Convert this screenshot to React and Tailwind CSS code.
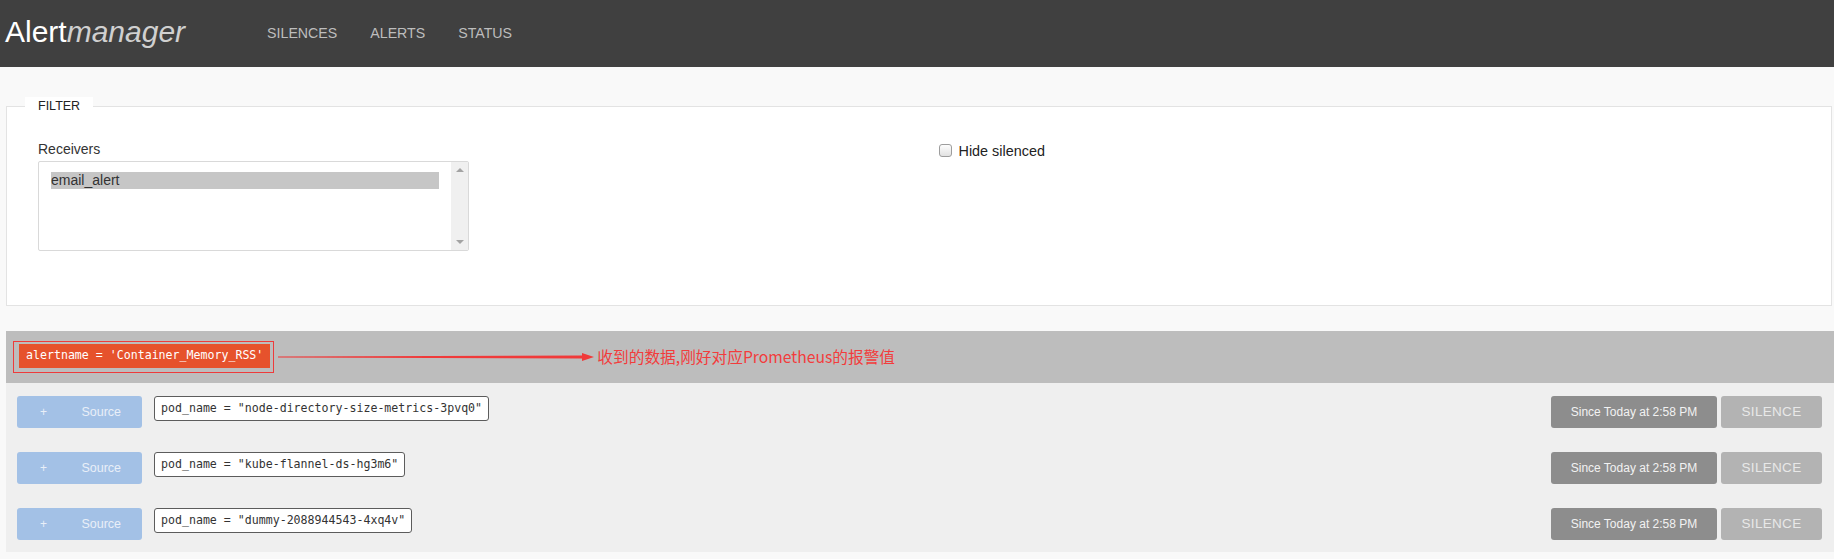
import React from 'react';

const sans = { fontFamily: '"Liberation Sans", Arial, sans-serif' };
const mono = { fontFamily: '"DejaVu Sans Mono", "Liberation Mono", monospace' };

const pods = [
    'pod_name = "node-directory-size-metrics-3pvq0"',
    'pod_name = "kube-flannel-ds-hg3m6"',
    'pod_name = "dummy-2088944543-4xq4v"',
];

const Header = () => (
    <div className="h-[67px] bg-[#404040] flex items-center">
        <div className="pl-[5px] text-[30px] leading-none text-white -mt-[4px]">
            Alert<em className="text-[#d0d0d0]">manager</em>
        </div>
        <nav className="flex ml-[82px] gap-[33px] text-[14.2px] text-[#bdbdbd]">
            <span>SILENCES</span>
            <span>ALERTS</span>
            <span>STATUS</span>
        </nav>
    </div>
);

const Filter = () => (
    <fieldset className="mt-[30px] ml-[6px] mr-[2px] border border-[#e3e3e3] bg-white px-[18px] pb-[54px]">
        <legend className="px-[13px] text-[12.5px] leading-[18px] text-[#222] bg-white">FILTER</legend>
        <div className="grid grid-cols-2 gap-x-[40px] pl-[13px] pr-[14px] pt-[24px]">
            <div>
                <div className="text-[14px] leading-[20px] text-[#333] mb-[2px]">Receivers</div>
                <div className="w-[431px] h-[90px] border border-[#d9d9d9] rounded-[2px] flex bg-white">
                    <div className="flex-1 pl-[12px] pr-[12px] pt-[10px]">
                        <div className="bg-[#c6c6c6] h-[17px] text-[14px] leading-[17px] text-[#333]">email_alert</div>
                    </div>
                    <div className="w-[17px] bg-[#f0f0f0] flex flex-col items-center justify-between py-[6px]">
                        <span className="w-0 h-0 border-x-[4px] border-x-transparent border-b-[4px] border-b-[#a3a3a3]"></span>
                        <span className="w-0 h-0 border-x-[4px] border-x-transparent border-t-[4px] border-t-[#a3a3a3]"></span>
                    </div>
                </div>
            </div>
            <div className="flex items-start pt-[2px]">
                <span className="w-[13px] h-[13px] mt-[3px] border border-[#9d9d9d] rounded-[3px] bg-gradient-to-b from-[#fdfdfd] to-[#e2e2e2]"></span>
                <span className="ml-[7px] text-[14.4px] leading-[20px] text-[#222]">Hide silenced</span>
            </div>
        </div>
    </fieldset>
);

const Arrow = () => (
    <svg width="318" height="12" viewBox="0 0 318 12" className="ml-[4px]">
        <polygon points="0,5.6 306,4.5 306,7.5 0,6.4" fill="#f03a3a" />
        <polygon points="304,2 316,6 304,10" fill="#f03a3a" />
    </svg>
);

const Row = ({ label }) => (
    <div className="flex items-start">
        <div className="w-[125px] h-[32px] bg-[#a3c1e6] rounded-[3px] flex items-center text-[12px] text-[#e9eff8]">
            <span className="pl-[23px]">+</span>
            <span className="ml-auto mr-[21px] text-[12.5px]">Source</span>
        </div>
        <div className="ml-[12px] h-[25px] border border-[#5c5c5c] rounded-[3px] bg-white px-[6px] flex items-center text-[11.6px] text-[#333]" style={mono}>
            {label}
        </div>
        <div className="ml-auto flex gap-[4px]">
            <div className="w-[166px] h-[32px] bg-[#8d8d8d] rounded-[3px] flex items-center justify-center text-[12px] text-[#f2f2f2]">
                Since Today at 2:58 PM
            </div>
            <div className="w-[101px] h-[32px] bg-[#b3b3b3] rounded-[3px] flex items-center justify-center text-[13.5px] tracking-[0.3px] text-[#e8e8e8]">
                SILENCE
            </div>
        </div>
    </div>
);

const AlertGroup = () => (
    <div className="mt-[25px] ml-[6px]">
        <div className="h-[52px] bg-[#bdbdbd] flex items-center pl-[7px]">
            <div className="border border-[#ee3b3b] pt-[2px] pr-[3px] pb-[4px] pl-[5px]">
                <div className="h-[24px] bg-[#e6522c] px-[7px] flex items-center text-[11.6px] text-white" style={mono}>
                    alertname = 'Container_Memory_RSS'
                </div>
            </div>
            <Arrow />
            <span className="ml-[1px] text-[15.7px] text-[#f23c3c]" style={{ fontFamily: '"Noto Sans CJK SC", "Liberation Sans", sans-serif' }}>
                收到的数据,刚好对应Prometheus的报警值
            </span>
        </div>
        <div className="bg-[#efefef] pt-[13px] pb-[12px] pl-[11px] pr-[12px] flex flex-col gap-[24px]">
            {pods.map((p) => (
                <Row key={p} label={p} />
            ))}
        </div>
    </div>
);

const App = () => {
    return (
        <div className="min-h-screen bg-[#f9f9f9]" style={sans}>
            <Header />
            <Filter />
            <AlertGroup />
        </div>
    );
};

export default App;
